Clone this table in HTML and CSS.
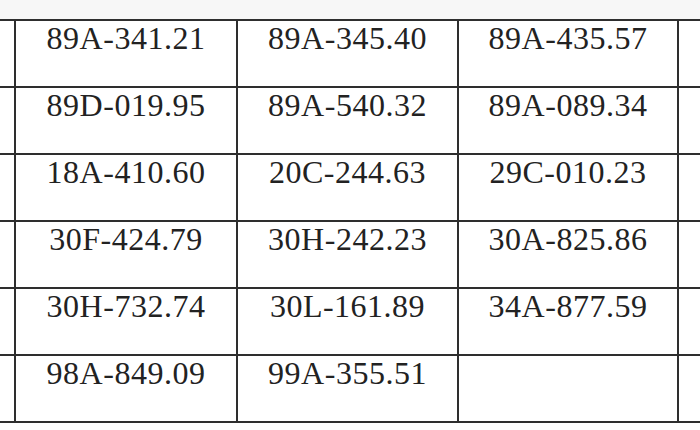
FILE: index.html
```html
<!DOCTYPE html>
<html>
<head>
<meta charset="utf-8">
<link rel="stylesheet" href="styles.css">
</head>
<body>
<div class="page">
  <div class="table">
    <div class="cell"></div><div class="cell">89A-341.21</div><div class="cell">89A-345.40</div><div class="cell">89A-435.57</div><div class="cell"></div>
    <div class="cell"></div><div class="cell">89D-019.95</div><div class="cell">89A-540.32</div><div class="cell">89A-089.34</div><div class="cell"></div>
    <div class="cell"></div><div class="cell">18A-410.60</div><div class="cell">20C-244.63</div><div class="cell">29C-010.23</div><div class="cell"></div>
    <div class="cell"></div><div class="cell">30F-424.79</div><div class="cell">30H-242.23</div><div class="cell">30A-825.86</div><div class="cell"></div>
    <div class="cell"></div><div class="cell">30H-732.74</div><div class="cell">30L-161.89</div><div class="cell">34A-877.59</div><div class="cell"></div>
    <div class="cell"></div><div class="cell">98A-849.09</div><div class="cell">99A-355.51</div><div class="cell"></div><div class="cell"></div>
  </div>
</div>
</body>
</html>
```
FILE: styles.css
```css
html, body {
  margin: 0;
  padding: 0;
  background: #ffffff;
  overflow: hidden;
}
.page {
  width: 700px;
  height: 430px;
  overflow: hidden;
  padding-top: 19px;
  box-sizing: border-box;
  background: linear-gradient(#f7f7f7 0, #f7f7f7 19px, #ffffff 19px);
}
.table {
  display: grid;
  grid-template-columns: 200px 220px 219px 218px 200px;
  grid-auto-rows: 65px;
  gap: 2px;
  padding: 2px 0;
  margin-left: -186px;
  width: max-content;
  background: #2e2e2e;
}
.cell {
  background: #ffffff;
  text-align: center;
  font-family: "Liberation Serif", "Times New Roman", serif;
  font-size: 32px;
  line-height: 34px;
  letter-spacing: 0.5px;
  color: #222222;
}
```
